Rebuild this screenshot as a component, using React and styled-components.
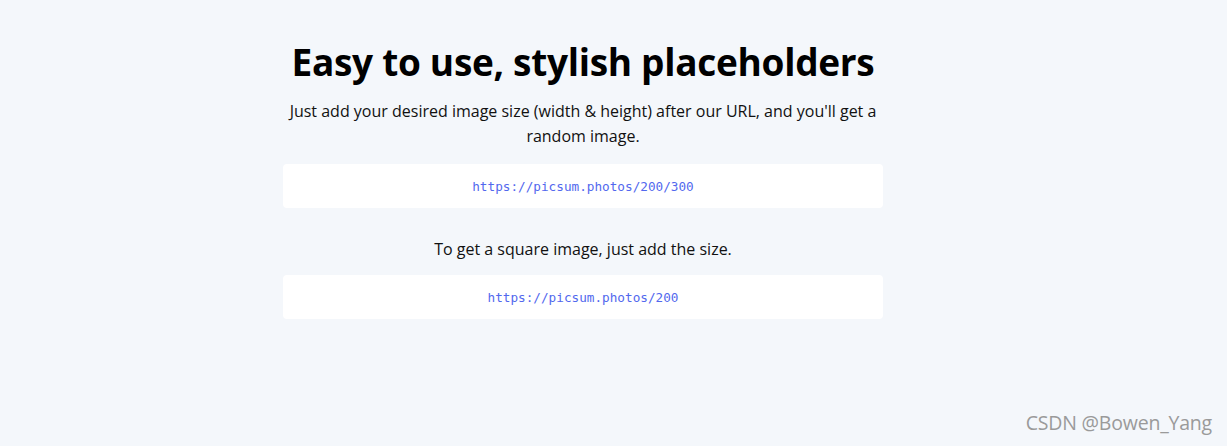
import styled, { createGlobalStyle } from "styled-components";

const GlobalStyle = createGlobalStyle`
  html, body {
    margin: 0;
    padding: 0;
    background: #f4f7fb;
  }
  body {
    font-family: "Open Sans", "Noto Sans", sans-serif;
    color: #111;
  }
`;

const Page = styled.div`
  position: relative;
  width: 100vw;
  height: 100vh;
  display: flex;
  justify-content: center;
  padding-right: 61px;
  box-sizing: border-box;
`;

const Column = styled.section`
  width: 600px;
  display: flex;
  flex-direction: column;
  align-items: center;
  padding-top: 38px;
`;

const Title = styled.h1`
  margin: 0;
  font-size: 37px;
  line-height: 48px;
  font-weight: 700;
  letter-spacing: -0.3px;
  color: #000;
`;

const Text = styled.p`
  margin: ${(p) => p.$top || 0}px 0 0;
  font-size: 16px;
  line-height: 25px;
  text-align: center;
  color: #111;
`;

const CodeBox = styled.div`
  margin-top: ${(p) => p.$top || 0}px;
  width: 100%;
  height: 44px;
  background: #fff;
  border-radius: 4px;
  display: flex;
  align-items: center;
  justify-content: center;
`;

const Code = styled.code`
  font-family: "DejaVu Sans Mono", "Liberation Mono", monospace;
  font-size: 12.7px;
  color: #5268ee;
`;

const Watermark = styled.span`
  position: absolute;
  right: 15px;
  bottom: 10px;
  font-size: 19.5px;
  color: #9a9a9a;
  letter-spacing: -0.2px;
`;

export default function App() {
  return (
    <>
      <GlobalStyle />
      <Page>
        <Column>
          <Title>Easy to use, stylish placeholders</Title>
          <Text $top={13}>
            Just add your desired image size (width &amp; height) after our
            URL, and you'll get a random image.
          </Text>
          <CodeBox $top={15}>
            <Code>https://picsum.photos/200/300</Code>
          </CodeBox>
          <Text $top={29}>To get a square image, just add the size.</Text>
          <CodeBox $top={13}>
            <Code>https://picsum.photos/200</Code>
          </CodeBox>
        </Column>
        <Watermark>CSDN @Bowen_Yang</Watermark>
      </Page>
    </>
  );
}
